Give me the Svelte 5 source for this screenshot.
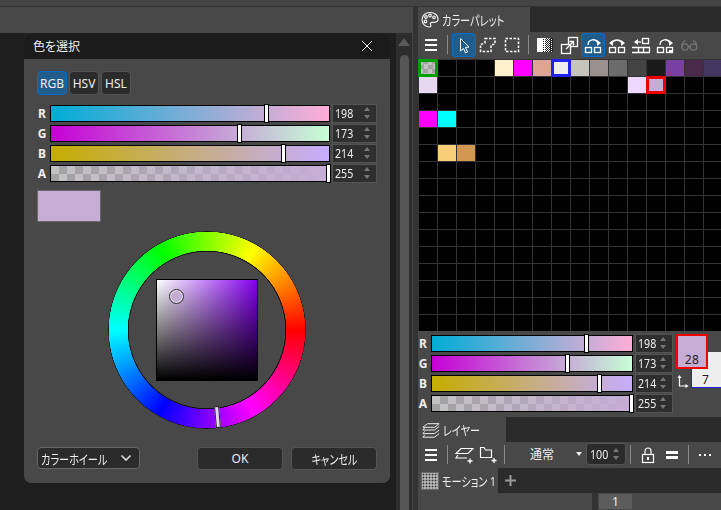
<script lang="ts">
	const color = { r: 198, g: 173, b: 214 };
	const hex = `rgb(${color.r},${color.g},${color.b})`;

	const channels = [
		{ label: 'R', value: color.r, from: `rgb(0,${color.g},${color.b})`, to: `rgb(255,${color.g},${color.b})`, alpha: false },
		{ label: 'G', value: color.g, from: `rgb(${color.r},0,${color.b})`, to: `rgb(${color.r},255,${color.b})`, alpha: false },
		{ label: 'B', value: color.b, from: `rgb(${color.r},${color.g},0)`, to: `rgb(${color.r},${color.g},255)`, alpha: false },
		{ label: 'A', value: 255, from: `rgba(${color.r},${color.g},${color.b},0)`, to: hex, alpha: true }
	];

	// palette rows: "row,col" -> colour
	const palette: Record<string, string> = {
		'0,4': '#fff0cc',
		'0,5': '#ff00ff',
		'0,6': '#dea597',
		'0,7': '#eeeeee',
		'0,8': '#c5c5bb',
		'0,9': '#9b9090',
		'0,10': '#6b6b6b',
		'0,11': '#444444',
		'0,12': '#1a1a1a',
		'0,13': '#7a3fa5',
		'0,14': '#4a2a4a',
		'0,15': '#433660',
		'1,0': '#e6d8ee',
		'1,11': '#eed8ff',
		'1,12': hex,
		'3,0': '#ff00ff',
		'3,1': '#00ffff',
		'5,1': '#f8cf78',
		'5,2': '#d19650'
	};
	const marked: Record<string, string> = { '0,0': 'green', '0,7': 'blue', '1,12': 'red' };

	const cells: { key: string; bg: string; mark: string; checker: boolean }[] = [];
	for (let r = 0; r < 16; r++) {
		for (let c = 0; c < 16; c++) {
			const key = `${r},${c}`;
			cells.push({ key, bg: palette[key] ?? '#000', mark: marked[key] ?? '', checker: key === '0,0' });
		}
	}
</script>

{#snippet slider(ch)}
	<div class="track" class:alpha={ch.alpha}>
		<div class="fill" style="background: linear-gradient(to right, {ch.from}, {ch.to})"></div>
		<div class="thumb" style="left: {(ch.value / 255) * 100}%"></div>
	</div>
{/snippet}

{#snippet numbox(value)}
	<div class="num">
		<span>{value}</span>
		<i class="spin"><b class="up"></b><b class="down"></b></i>
	</div>
{/snippet}

{#snippet burger()}
	<span class="tool">
		<svg width="24" height="24" fill="#fff"><rect x="6" y="6" width="12" height="2" /><rect x="6" y="11" width="12" height="2" /><rect x="6" y="16" width="12" height="2" /></svg>
	</span>
{/snippet}

<div class="app">
	<div class="strip"></div>
	<div class="main">
		<section class="left">
			<div class="band"></div>
			<div class="workspace">
				<div class="canvas"></div>
				<div class="scroll">
					<b class="scroll-up"></b>
					<div class="scroll-thumb"></div>
				</div>
				<div class="scroll-edge"></div>

				<div class="dialog">
					<header class="dlg-title">
						<span>色を選択</span>
						<svg width="12" height="12" fill="none" stroke="#eee"><path d="M1 1l10 10M11 1L1 11" /></svg>
					</header>
					<div class="dlg-body">
						<div class="modes">
							<button class="mode on">RGB</button>
							<button class="mode">HSV</button>
							<button class="mode">HSL</button>
						</div>
						<div class="rows">
							{#each channels as ch}
								<div class="row">
									<span class="lab">{ch.label}</span>
									{@render slider(ch)}
									{@render numbox(ch.value)}
								</div>
							{/each}
						</div>
						<div class="preview" style="background: {hex}"></div>
						<div class="wheel-wrap">
							<div class="wheel">
								<div class="ring"></div>
								<div class="sv">
									<div class="picker"></div>
								</div>
								<div class="hue-thumb"></div>
							</div>
						</div>
						<div class="footer">
							<div class="select">
								<span class="kana">カラーホイール</span>
								<svg width="12" height="8" fill="none" stroke="#ddd" stroke-width="1.6"><path d="M1.5 1.5L6 6l4.5-4.5" /></svg>
							</div>
							<button class="btn ok">OK</button>
							<button class="btn"><span class="kana mid">キャンセル</span></button>
						</div>
					</div>
				</div>
			</div>
		</section>

		<div class="divider"></div>

		<section class="right">
			<div class="tabs">
				<div class="tab palette-tab">
					<svg width="18" height="18" viewBox="0 0 18 18" fill="none" stroke="#eee" stroke-width="1.2">
						<path d="M9 1.5C4.5 1.5 1 4.6 1 8.6c0 4 3.4 7.4 7.4 7.4 1.6 0 1.8-1.2 1.2-2.2-.7-1.2 0-2.5 1.5-2.5h2.5c2 0 3.4-1.2 3.4-3.2C17 4.2 13.5 1.5 9 1.5z" />
						<circle cx="5" cy="6" r="1.3" /><circle cx="9" cy="4.5" r="1.3" /><circle cx="13" cy="6.3" r="1.3" /><circle cx="4.5" cy="10.5" r="1.3" />
					</svg>
					<span class="kana">カラーパレット</span>
				</div>
			</div>

			<div class="toolbar">
				{@render burger()}
				<i class="sep"></i>
				<span class="tool on">
					<svg width="24" height="24" fill="none" stroke="#fff"><path d="M8.5 5.5V18l3-2.5 2 4.5 2-1-2-4.5 3.5-.5z" /></svg>
				</span>
				<span class="tool">
					<svg width="24" height="24" fill="none" stroke="#fff" stroke-width="1.5" stroke-dasharray="2.5 1.5"><path d="M9 5.5h10V11l-4 1v6.5H4.5v-7L9 10z" /></svg>
				</span>
				<span class="tool">
					<svg width="24" height="24" fill="none" stroke="#fff" stroke-width="1.5" stroke-dasharray="2.5 1.5"><rect x="5.5" y="5.5" width="13" height="13" /></svg>
				</span>
				<i class="sep"></i>
				<span class="tool">
					<svg width="24" height="24">
						<defs>
							<pattern id="d25" width="2" height="2" patternUnits="userSpaceOnUse"><rect width="2" height="2" fill="#fff" /><rect width="1" height="1" fill="#222" /></pattern>
							<pattern id="d50" width="2" height="2" patternUnits="userSpaceOnUse"><rect width="2" height="2" fill="#fff" /><rect width="1" height="1" fill="#222" /><rect x="1" y="1" width="1" height="1" fill="#222" /></pattern>
							<pattern id="d75" width="2" height="2" patternUnits="userSpaceOnUse"><rect width="2" height="2" fill="#222" /><rect width="1" height="1" fill="#fff" /></pattern>
						</defs>
						<rect x="4" y="5" width="5" height="14" fill="#fff" />
						<rect x="9" y="5" width="4" height="14" fill="url(#d25)" />
						<rect x="13" y="5" width="4" height="14" fill="url(#d50)" />
						<rect x="17" y="5" width="3" height="14" fill="url(#d75)" />
					</svg>
				</span>
				<span class="tool">
					<svg width="24" height="24" fill="none" stroke="#fff" stroke-width="1.3"><rect x="11.5" y="4.5" width="9" height="9" /><rect x="4.5" y="11.5" width="9" height="9" fill="#484848" /><path d="M9 16l7-7M12.5 8.5H16.5V12.5" /></svg>
				</span>
				<span class="tool on">
					<svg width="24" height="24" fill="none" stroke="#fff" stroke-width="1.3"><rect x="4.5" y="14.5" width="6" height="5" /><rect x="13.5" y="14.5" width="6" height="5" /><path d="M7 12c0-6 8-7 10-2" /><path d="M20 10l-4-3v6z" fill="#fff" stroke="none" /></svg>
				</span>
				<span class="tool">
					<svg width="24" height="24" fill="none" stroke="#fff" stroke-width="1.3"><rect x="4.5" y="14.5" width="6" height="5" /><rect x="13.5" y="14.5" width="6" height="5" /><path d="M7 10c2-4 8-4 10 0" /><path d="M4 10l4-3v6zM20 10l-4-3v6z" fill="#fff" stroke="none" /></svg>
				</span>
				<span class="tool">
					<svg width="24" height="24" fill="none" stroke="#fff" stroke-width="1.3"><rect x="13.5" y="5.5" width="6" height="5" /><path d="M12 9H8" /><path d="M5 9l4-3v6z" fill="#fff" stroke="none" /><path d="M3 14.5h18M3 19.5h18M9.5 14.5v5M14.5 14.5v5M20.5 14.5v5" /></svg>
				</span>
				<span class="tool">
					<svg width="24" height="24" fill="none" stroke="#fff" stroke-width="1.3"><rect x="4.5" y="14.5" width="6" height="5" /><rect x="13.5" y="14.5" width="6" height="5" /><rect x="16" y="17" width="3" height="2.5" fill="#fff" stroke="none" /><path d="M7 12c0-6 8-7 10-2" /><path d="M20 10l-4-3v6z" fill="#fff" stroke="none" /></svg>
				</span>
				<span class="tool">
					<svg width="24" height="24" fill="none" stroke="#757575" stroke-width="1.3"><circle cx="8" cy="14" r="3.2" /><circle cx="16.5" cy="14" r="3.2" /><path d="M11.2 13.5h2.1M4.8 13.5c0-3 1.5-5 3.7-6M19.7 13.5c0-3-1.5-5-3.7-6" /></svg>
				</span>
			</div>

			<div class="grid">
				{#each cells as cell (cell.key)}
					<div class="cell {cell.mark}" class:checker={cell.checker} style="background-color: {cell.bg}"></div>
				{/each}
			</div>

			<div class="color-panel">
				<div class="rows small">
					{#each channels as ch}
						<div class="row">
							<span class="lab">{ch.label}</span>
							{@render slider(ch)}
							{@render numbox(ch.value)}
						</div>
					{/each}
				</div>
				<div class="swatches">
					<div class="swatch back"><span>7</span></div>
					<div class="swatch front" style="background: {hex}"><span>28</span></div>
					<svg class="swap" width="12" height="14" fill="none" stroke="#fff" stroke-width="1.2"><path d="M2.5 3v9h7" /><path d="M2.5 1L.5 4h4zM11.5 12l-3-2v4z" fill="#fff" stroke="none" /></svg>
				</div>
			</div>

			<div class="tabs layer-tabs">
				<div class="tab layer-tab">
					<svg width="18" height="18" viewBox="0 0 20 18" fill="none" stroke="#eee" stroke-width="1.1"><path d="M6 2h13l-5 4H1zM3 6.5L1 9h13l5-4M3 10.5L1 13h13l5-4M3 14.5L1 17h13l5-4" /></svg>
					<span class="kana">レイヤー</span>
				</div>
			</div>

			<div class="toolbar layer-bar">
				{@render burger()}
				<i class="sep"></i>
				<span class="tool">
					<svg width="24" height="24" fill="none" stroke="#fff" stroke-width="1.1"><path d="M9 5.5h12l-5 5H4zM6 12l-2 3h11" /><path d="M18 15.5v5M15.5 18h5" stroke-width="1.3" /></svg>
				</span>
				<span class="tool">
					<svg width="24" height="24" fill="none" stroke="#fff" stroke-width="1.2"><path d="M4.5 4.5v10h11V7H9.5L8 4.5z" /><path d="M18 15v5M15.5 17.5h5" stroke-width="1.3" /></svg>
				</span>
				<i class="sep"></i>
				<div class="blend">
					<span>通常</span>
					<b></b>
				</div>
				<div class="num opacity">
					<span>100</span>
					<i class="spin"><b class="up"></b><b class="down"></b></i>
				</div>
				<i class="sep wide"></i>
				<span class="tool">
					<svg width="24" height="24" fill="none" stroke="#fff" stroke-width="1.2"><rect x="6.5" y="11.5" width="11" height="8" /><path d="M9 11V8a3 3 0 0 1 6 0v3" /><path d="M12 14v3" stroke-width="2" /></svg>
				</span>
				<span class="tool">
					<svg width="24" height="24" fill="#fff"><rect x="6" y="8" width="12" height="3" /><rect x="6" y="13" width="12" height="3" /></svg>
				</span>
				<i class="sep"></i>
				<span class="tool">
					<svg width="24" height="24" fill="#fff"><rect x="6" y="11" width="2" height="2" /><rect x="11" y="11" width="2" height="2" /><rect x="16" y="11" width="2" height="2" /></svg>
				</span>
			</div>

			<div class="tabs motion-tabs">
				<div class="tab motion-tab">
					<div class="thumb-img"></div>
					<span class="kana">モーション 1</span>
				</div>
				<svg class="plus" width="11" height="11" stroke="#999" stroke-width="2"><path d="M5.5 0v11M0 5.5h11" /></svg>
			</div>

			<div class="timeline">
				<div class="frame-gap"></div>
				<div class="frame">1</div>
			</div>
		</section>
	</div>
</div>

<style>
	:global(body) {
		background: #1e1e1e;
	}
	.app {
		width: 721px;
		height: 510px;
		overflow: hidden;
		display: flex;
		flex-direction: column;
		background: #444;
		color: #eee;
		font-family: 'Noto Sans', 'Noto Sans CJK JP', sans-serif;
		font-size: 12px;
		font-feature-settings: 'palt';
	}
	.kana {
		display: inline-block;
		white-space: nowrap;
		font-size: 13px;
		transform: scaleX(0.78);
		transform-origin: left center;
	}
	.kana.mid {
		transform-origin: center;
	}
	.strip {
		height: 6px;
		flex: none;
		border-bottom: 1px solid #333;
		background: #444;
	}
	.main {
		flex: 1;
		min-height: 0;
		display: grid;
		grid-template-columns: 413px 5px 303px;
	}
	.divider {
		background: #333;
	}

	/* left side */
	.left {
		display: flex;
		flex-direction: column;
	}
	.band {
		height: 26px;
		flex: none;
		background: #484848;
	}
	.workspace {
		flex: 1;
		position: relative;
		display: flex;
	}
	.canvas {
		flex: 1;
		background: #1e1e1e;
	}
	.scroll {
		width: 16px;
		background: #2d2d2d;
		display: flex;
		flex-direction: column;
		align-items: center;
		padding-top: 5px;
	}
	.scroll-up {
		width: 0;
		height: 0;
		border-left: 6px solid transparent;
		border-right: 6px solid transparent;
		border-bottom: 8px solid #5a5a5a;
	}
	.scroll-thumb {
		flex: 1;
		width: 9px;
		margin-top: 9px;
		border-radius: 5px 5px 0 0;
		background: #555;
	}
	.scroll-edge {
		width: 1px;
		background: #444;
	}

	.dialog {
		position: absolute;
		left: 24px;
		top: 0;
		width: 366px;
		height: 450px;
		background: #484848;
		border-radius: 7px;
		overflow: hidden;
		display: flex;
		flex-direction: column;
	}
	.dlg-title {
		height: 26px;
		flex: none;
		background: #1b1b1b;
		display: flex;
		align-items: center;
		justify-content: space-between;
		padding: 0 17px 0 9px;
		font-size: 12px;
	}
	.dlg-body {
		padding: 12px 13px 0;
	}
	.modes {
		display: flex;
		gap: 2px;
		margin-bottom: 8px;
	}
	.mode {
		height: 24px;
		width: 30px;
		padding: 0;
		box-sizing: border-box;
		border: 1px solid #555;
		border-radius: 4px;
		background: #2b2b2b;
		color: #eee;
		font: inherit;
		font-size: 12px;
	}
	.mode.on {
		background: #215d8c;
		border-color: #0a6cc4;
	}

	.row {
		height: 20px;
		display: flex;
		align-items: center;
	}
	.lab {
		width: 13px;
		flex: none;
		padding-right: 3px;
		box-sizing: border-box;
		text-align: center;
		font-weight: 700;
		font-size: 12px;
	}
	.track {
		flex: 1;
		height: 17px;
		box-sizing: border-box;
		border: 1px solid #000;
		position: relative;
		margin-right: 2px;
	}
	.track.alpha,
	.checker {
		background-image: conic-gradient(#a2a2a2 25%, #c2c2c2 0 50%, #a2a2a2 0 75%, #c2c2c2 0);
		background-size: 16px 16px;
	}
	.fill {
		position: absolute;
		inset: 0;
	}
	.thumb {
		position: absolute;
		top: -2px;
		bottom: -2px;
		width: 3px;
		margin-left: -3px;
		background: #fff;
		border: 1px solid #000;
	}
	.num {
		width: 45px;
		height: 19px;
		flex: none;
		box-sizing: border-box;
		border: 1px solid #555;
		background: #2e2e2e;
		display: flex;
		align-items: center;
		justify-content: space-between;
		padding: 0 6px 0 2px;
		font-size: 13px;
	}
	.num span {
		display: inline-block;
		transform: scaleX(0.82);
		transform-origin: left center;
	}
	.spin {
		display: flex;
		flex-direction: column;
		gap: 4px;
	}
	.spin b {
		display: block;
		width: 0;
		height: 0;
		border-left: 3px solid transparent;
		border-right: 3px solid transparent;
	}
	.spin .up {
		border-bottom: 4px solid #777;
	}
	.spin .down {
		border-top: 4px solid #777;
	}

	.preview {
		width: 64px;
		height: 32px;
		box-sizing: border-box;
		border: 1px solid #6a6a6a;
		margin-top: 7px;
	}
	.wheel-wrap {
		margin-top: 9px;
		display: flex;
		justify-content: center;
	}
	.wheel {
		width: 198px;
		height: 198px;
		position: relative;
		display: flex;
		align-items: center;
		justify-content: center;
	}
	.ring {
		position: absolute;
		inset: 0;
		border-radius: 50%;
		background:
			radial-gradient(closest-side, #111 79px, transparent 79.5px 98px, #111 98.5px),
			conic-gradient(from 90deg, #f00, #f0f, #00f, #0ff, #0f0, #ff0, #f00);
		-webkit-mask: radial-gradient(closest-side, transparent 78px, #000 78.5px);
		mask: radial-gradient(closest-side, transparent 78px, #000 78.5px);
	}
	.sv {
		width: 102px;
		height: 102px;
		box-sizing: border-box;
		border: 1px solid #000;
		position: relative;
		background:
			linear-gradient(to bottom, transparent, #000),
			linear-gradient(to right, #fff, #8400ee);
	}
	.picker {
		position: absolute;
		left: 13px;
		top: 10px;
		width: 13px;
		height: 13px;
		box-sizing: border-box;
		border-radius: 50%;
		border: 1px solid #eee;
		outline: 1px solid #333;
		background: #c6add6;
	}
	.hue-thumb {
		position: absolute;
		left: 107px;
		top: 175px;
		width: 5px;
		height: 22px;
		box-sizing: border-box;
		border: 1px solid #222;
		background: #e8d4f2;
		transform: rotate(-5deg);
	}
	.footer {
		margin-top: 18px;
		display: flex;
		align-items: flex-start;
	}
	.select {
		width: 103px;
		height: 22px;
		box-sizing: border-box;
		border: 1px solid #666;
		border-radius: 4px;
		background: #2b2b2b;
		display: flex;
		align-items: center;
		justify-content: space-between;
		padding: 0 7px 0 3px;
		overflow: hidden;
	}
	.select .kana {
		margin-right: -20px;
	}
	.select svg {
		flex: none;
	}
	.btn {
		width: 86px;
		height: 23px;
		box-sizing: border-box;
		border: 1px solid #555;
		border-radius: 4px;
		background: #2b2b2b;
		color: #eee;
		font: inherit;
		padding: 0;
		margin-left: 8px;
	}
	.btn.ok {
		margin-left: 57px;
	}

	/* right side */
	.right {
		display: flex;
		flex-direction: column;
		background: #484848;
		min-height: 0;
		overflow: hidden;
	}
	.tabs {
		height: 25px;
		flex: none;
		display: flex;
		align-items: stretch;
		background: #2b2b2b;
	}
	.tab {
		background: #484848;
		display: flex;
		align-items: center;
		font-size: 12px;
		overflow: hidden;
	}
	.palette-tab {
		width: 112px;
		padding-left: 3px;
		gap: 3px;
		box-sizing: border-box;
	}
	.toolbar {
		height: 27px;
		flex: none;
		box-sizing: border-box;
		padding: 1px 0 0 1px;
		display: flex;
		align-items: flex-start;
		background: #484848;
	}
	.tool {
		width: 24px;
		height: 24px;
		flex: none;
		box-sizing: border-box;
		border-radius: 4px;
	}
	.tool svg {
		display: block;
	}
	.tool.on {
		background: #215d8c;
		box-shadow: inset 0 0 0 1px #0a6cc4;
	}
	.sep {
		width: 1px;
		height: 19px;
		margin: 2px 4px 0;
		flex: none;
		background: #888;
	}
	.sep.wide {
		margin: 2px 5px 0 4px;
	}

	.grid {
		height: 272px;
		flex: none;
		box-sizing: border-box;
		padding: 1px 0 0 1px;
		display: grid;
		grid-template-columns: repeat(16, 18px);
		grid-auto-rows: 16px;
		gap: 1px;
		background: #333;
	}
	.cell.checker {
		background-size: 9px 9px;
	}
	.cell.green,
	.cell.blue,
	.cell.red {
		outline: 3px solid;
		outline-offset: -2px;
		z-index: 1;
	}
	.cell.green {
		outline-color: #00a000;
	}
	.cell.blue {
		outline-color: #2222ee;
	}
	.cell.red {
		outline-color: #ee0000;
	}

	.color-panel {
		height: 84px;
		flex: none;
		padding-top: 2px;
		box-sizing: border-box;
		display: flex;
		position: relative;
	}
	.small {
		width: 255px;
		flex: none;
	}
	.small .num {
		width: 38px;
	}
	.swatches {
		position: relative;
		flex: 1;
	}
	.swatch {
		position: absolute;
		box-sizing: border-box;
		display: flex;
		align-items: flex-end;
		justify-content: center;
		color: #222;
	}
	.swatch span {
		line-height: 1;
	}
	.front {
		left: 3px;
		top: 1px;
		width: 32px;
		height: 35px;
		border: 2px solid #ee0000;
		padding-bottom: 1px;
		letter-spacing: 0.5px;
	}
	.back {
		left: 18px;
		top: 19px;
		width: 40px;
		height: 36px;
		background: #eee;
		border-left: 1px solid #2222ee;
		border-bottom: 1px solid #2222ee;
		justify-content: flex-start;
		padding: 0 0 1px 10px;
	}
	.swap {
		position: absolute;
		left: 4px;
		top: 41px;
	}

	.layer-tabs {
		margin-top: 2px;
	}
	.layer-tab {
		width: 88px;
		padding-left: 4px;
		gap: 3px;
		box-sizing: border-box;
	}
	.layer-bar {
		height: 26px;
	}
	.blend {
		width: 77px;
		flex: none;
		height: 22px;
		box-sizing: border-box;
		display: flex;
		align-items: center;
		padding: 0 4px 0 21px;
		justify-content: space-between;
		font-size: 12px;
	}
	.blend b {
		width: 0;
		height: 0;
		border-left: 3.5px solid transparent;
		border-right: 3.5px solid transparent;
		border-top: 4px solid #eee;
	}
	.opacity {
		width: 40px;
		height: 22px;
		background: #2b2b2b;
		border-radius: 3px;
		padding-right: 6px;
		padding-left: 3px;
	}
	.motion-tab {
		width: 80px;
		box-sizing: border-box;
		padding-left: 3px;
		gap: 3px;
	}
	.thumb-img {
		width: 18px;
		height: 18px;
		flex: none;
		background-color: #b4b4b4;
		background-image: radial-gradient(#333 0.8px, transparent 1.1px);
		background-size: 3px 3px;
		border: 1px solid #666;
		box-sizing: border-box;
	}
	.plus {
		align-self: center;
		margin-left: 7px;
	}
	.timeline {
		flex: 1;
		display: flex;
		padding-left: 174px;
		background: #484848;
	}
	.frame-gap {
		width: 6px;
		background: #333;
		margin-right: 1px;
	}
	.frame {
		width: 33px;
		height: 15px;
		margin-top: 1px;
		box-sizing: border-box;
		padding-top: 1px;
		background: #5c5c5c;
		text-align: center;
		line-height: 14px;
		font-size: 12px;
	}
</style>
